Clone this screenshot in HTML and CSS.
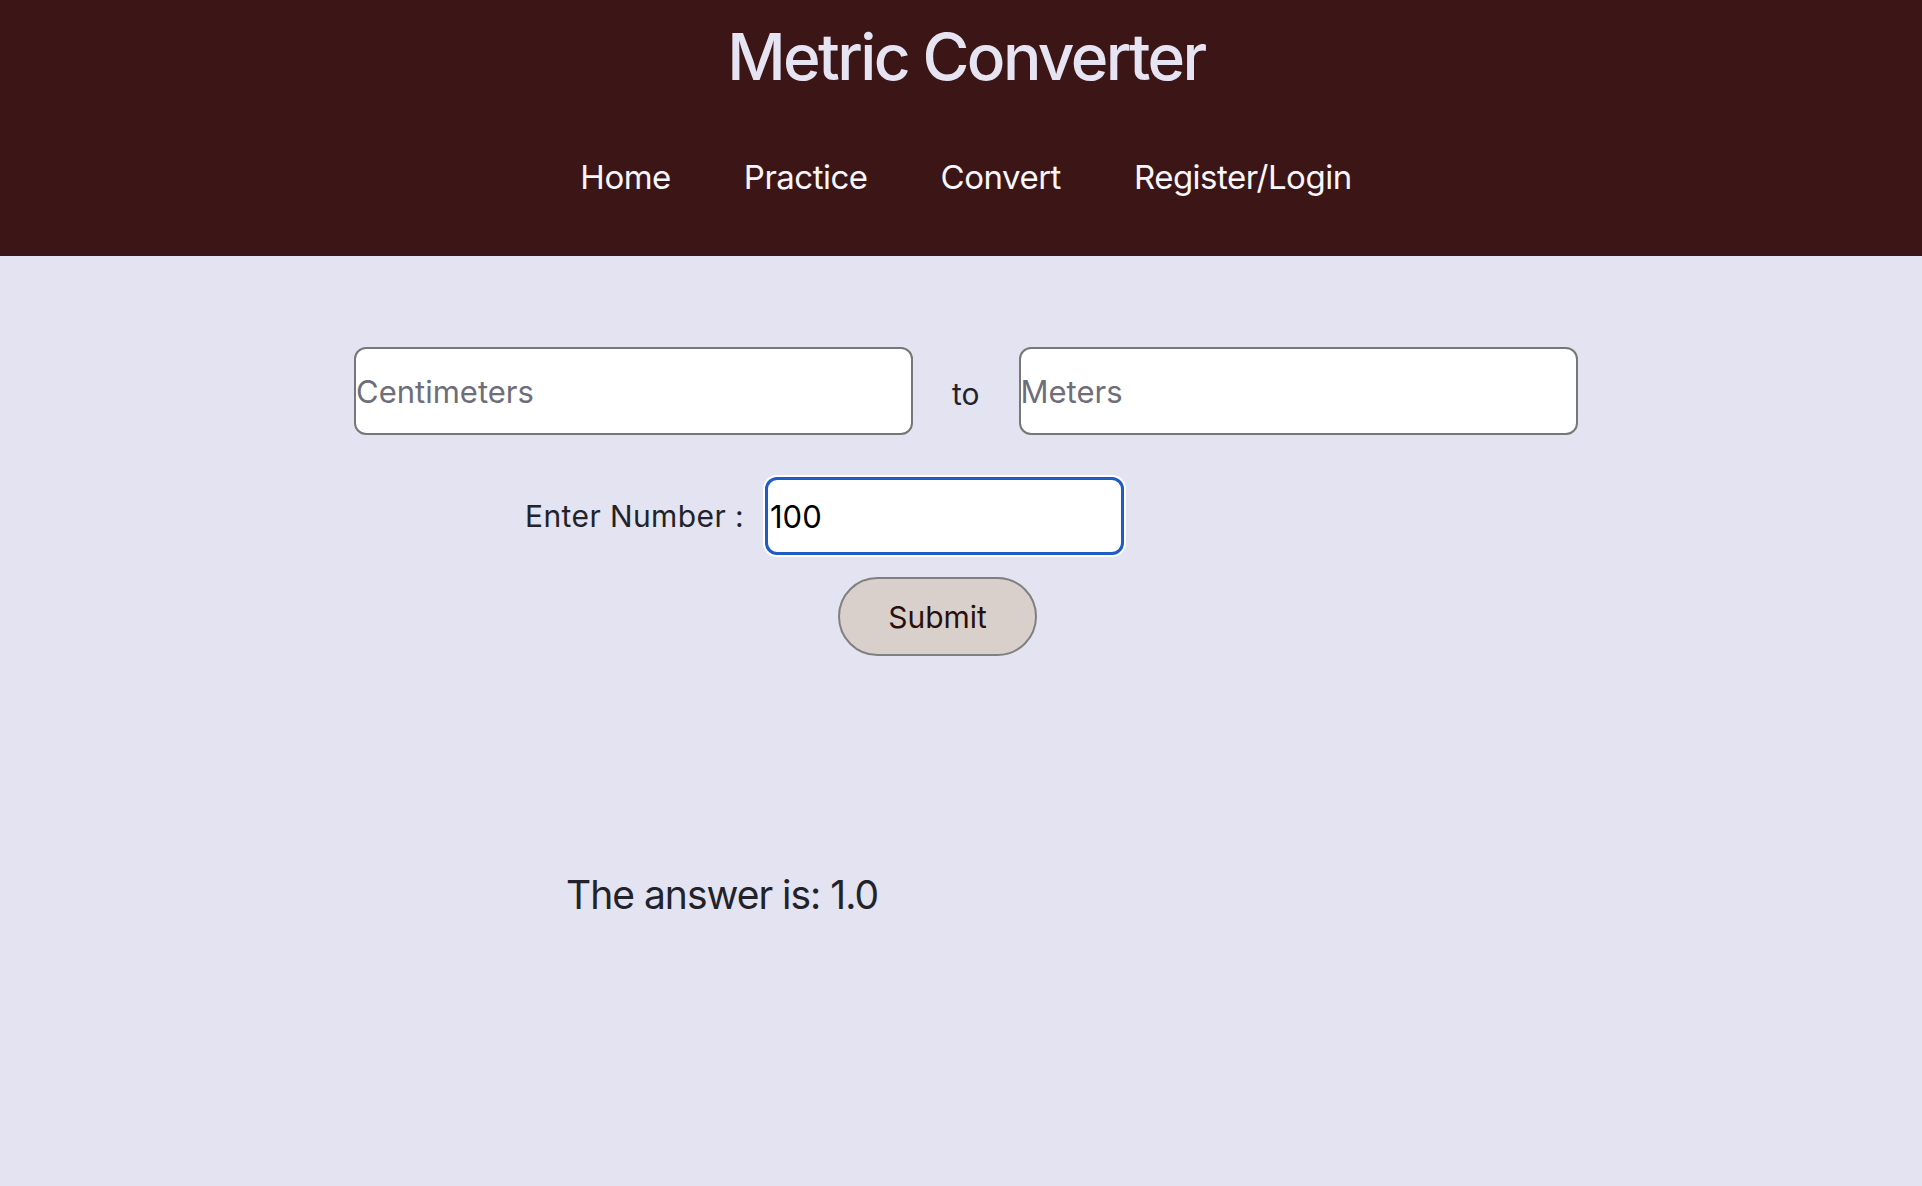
FILE: index.html
```html
<!DOCTYPE html>
<html lang="en">
<head>
<meta charset="utf-8">
<title>Metric Converter</title>
<link rel="stylesheet" href="styles.css">
</head>
<body>
<header class="site-header">
  <h1 class="site-title">Metric Converter</h1>
  <nav class="site-nav">
    <a class="nav-link" href="#">Home</a>
    <a class="nav-link" href="#">Practice</a>
    <a class="nav-link" href="#">Convert</a>
    <a class="nav-link" href="#">Register/Login</a>
  </nav>
</header>
<main class="converter">
  <form class="convert-form" onsubmit="return false">
    <div class="units-row">
      <input class="unit-input" type="text" placeholder="Centimeters">
      <span class="units-to">to</span>
      <input class="unit-input" type="text" placeholder="Meters">
    </div>
    <div class="number-row">
      <label class="number-label" for="num">Enter Number :</label>
      <input class="number-input" id="num" type="text" value="100">
    </div>
    <div class="submit-row">
      <button class="submit-btn" type="submit">Submit</button>
    </div>
  </form>
  <p class="answer">The answer is: 1.0</p>
</main>
</body>
</html>
```

FILE: styles.css
```css
html, body {
  margin: 0;
  padding: 0;
}
body {
  background: #e3e3f1;
  font-family: Inter, "Liberation Sans", Arial, sans-serif;
  color: #22232a;
  min-height: 1186px;
}
.site-header {
  background: #3c1516;
  height: 256px;
  box-sizing: border-box;
  padding-top: 25px;
  padding-left: 10px;
  display: flex;
  flex-direction: column;
  align-items: center;
}
.site-title {
  margin: 0;
  font-size: 64px;
  line-height: 64px;
  font-weight: 500;
  color: #e6e4f3;
  letter-spacing: -2.6px;
}
.site-nav {
  margin-top: 72px;
  display: flex;
  gap: 73px;
}
.nav-link {
  font-size: 33px;
  line-height: 33px;
  color: #f7f6fb;
  text-decoration: none;
  letter-spacing: -0.5px;
}
.converter {
  padding-left: 354px;
  padding-top: 91px;
}
.convert-form {
  margin: 0;
}
.units-row {
  display: flex;
  align-items: center;
}
.unit-input {
  width: 559px;
  height: 88px;
  box-sizing: border-box;
  border: 2px solid #777779;
  border-radius: 12px;
  background: #fff;
  padding: 0;
  font-family: inherit;
  font-size: 31px;
  color: #22232a;
  outline: none;
}
.unit-input::placeholder {
  color: #6e6e7a;
}
.units-to {
  margin: 0 39px;
  font-size: 30px;
  padding-top: 6px;
  color: #22232a;
}
.number-row {
  display: flex;
  align-items: center;
  margin-top: 42px;
}
.number-label {
  width: 390px;
  text-align: right;
  font-size: 30px;
  letter-spacing: 0.4px;
  color: #22232a;
}
.number-input {
  margin-left: 21px;
  width: 359px;
  height: 78px;
  box-sizing: border-box;
  border: 3px solid #1f5cc6;
  border-radius: 12px;
  box-shadow: 0 0 0 2px #ffffff;
  background: #fff;
  padding: 0 0 0 2px;
  font-family: inherit;
  font-size: 31px;
  color: #000;
  outline: none;
}
.submit-row {
  margin-top: 22px;
  padding-left: 484px;
}
.submit-btn {
  width: 199px;
  height: 79px;
  box-sizing: border-box;
  border: 2px solid #808080;
  border-radius: 40px;
  background: #d9d0cc;
  font-family: inherit;
  font-size: 30px;
  color: #2a0f0f;
  padding: 0;
}
.answer {
  margin: 219px 0 0 212px;
  font-size: 39px;
  line-height: 40px;
  color: #22232a;
  letter-spacing: -1px;
}
```
